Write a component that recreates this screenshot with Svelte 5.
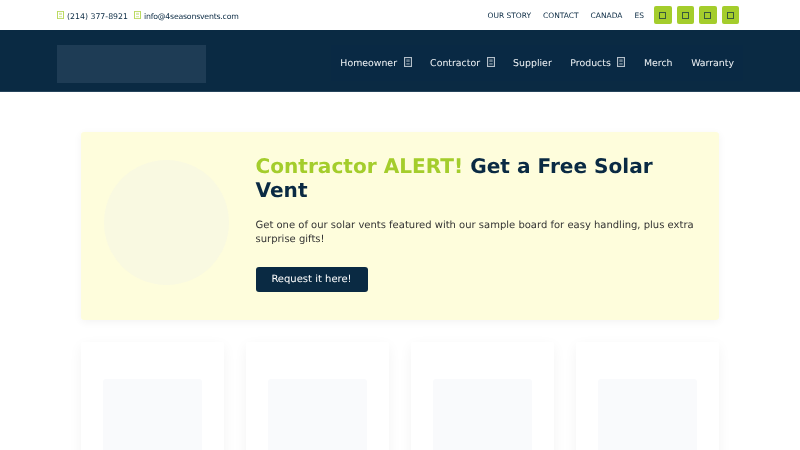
<script>
  const nav = [
    { label: 'Homeowner', caret: true },
    { label: 'Contractor', caret: true },
    { label: 'Supplier' },
    { label: 'Products', caret: true },
    { label: 'Merch' },
    { label: 'Warranty' }
  ];
</script>

<!-- the source icons are missing-glyph boxes, so they are drawn as small hollow boxes -->
{#snippet glyphBox()}
  <svg class="glyph" viewBox="0 0 7 9" aria-hidden="true" preserveAspectRatio="none">
    <rect x="0.5" y="0.5" width="6" height="8" fill="none" stroke="currentColor" stroke-opacity="0.75" />
    <path d="M2 2h3v2.5H2zM2 5.5h3V7H2z" fill="currentColor" fill-opacity="0.4" />
  </svg>
{/snippet}

<div class="page">
  <div class="topbar">
    <div class="contact">
      <span class="contact-item">{@render glyphBox()}(214) 377-8921</span>
      <span class="contact-item mail">{@render glyphBox()}info@4seasonsvents.com</span>
    </div>
    <div class="toplinks">
      <a href="#story">OUR STORY</a>
      <a href="#contact">CONTACT</a>
      <a href="#canada">CANADA</a>
      <a href="#es">ES</a>
      <div class="socials">
        {#each [1, 2, 3, 4] as s}
          <a class="social" href="#social{s}"><span class="social-box"></span></a>
        {/each}
      </div>
    </div>
  </div>

  <header class="header">
    <div class="logo"></div>
    <nav class="nav">
      {#each nav as item}
        <a class="nav-item" href="#nav">{item.label}{#if item.caret}{@render glyphBox()}{/if}</a>
      {/each}
    </nav>
  </header>

  <main>
    <section class="promo">
      <div class="circle"></div>
      <div class="promo-text">
        <h2><span class="lime">Contractor ALERT!</span> Get a Free Solar Vent</h2>
        <p>Get one of our solar vents featured with our sample board for easy handling, plus extra surprise gifts!</p>
        <a class="btn" href="#request">Request it here!</a>
      </div>
    </section>

    <section class="cards">
      {#each [1, 2, 3, 4] as c}
        <div class="card"><div class="thumb"></div></div>
      {/each}
    </section>
  </main>
</div>

<style>
  :global(body) {
    margin: 0;
    background: #fff;
    font-family: "DejaVu Sans", sans-serif;
    text-rendering: geometricPrecision;
    overflow: hidden;
    height: 450px;
  }

  .page {
    height: 450px;
    overflow: hidden;
    filter: blur(0.35px);
  }

  a {
    color: inherit;
    text-decoration: none;
  }

  .topbar {
    height: 30px;
    padding: 0 61px 0 57px;
    display: flex;
    align-items: center;
    justify-content: space-between;
    color: #0a2a43;
  }

  .contact {
    display: flex;
    gap: 6px;
    font-size: 7.8px;
    margin-top: 2px;
  }

  .contact-item {
    display: flex;
    align-items: center;
    gap: 3px;
  }

  .mail {
    letter-spacing: -0.22px;
  }

  .contact-item .glyph {
    width: 7px;
    height: 8px;
    color: #a4cd2c;
    margin-top: -3px;
  }

  .toplinks {
    display: flex;
    align-items: center;
    gap: 12px;
    font-size: 7.5px;
  }

  .socials {
    display: flex;
    gap: 5px;
    margin-left: -2px;
  }

  .social {
    width: 17.5px;
    height: 17.5px;
    border-radius: 2px;
    background: #a4cd2c;
    display: flex;
    align-items: center;
    justify-content: center;
  }

  .social-box {
    width: 7px;
    height: 7px;
    box-sizing: border-box;
    border: 1px solid rgba(10, 42, 67, 0.7);
  }

  .header {
    height: 62px;
    padding: 15px 57px 0;
    background: #0a2a43;
    display: flex;
    align-items: flex-start;
    justify-content: space-between;
    box-sizing: border-box;
    border-bottom: 1px solid #26445c;
  }

  .logo {
    width: 149px;
    height: 38px;
    background: #1e3c55;
  }

  .nav {
    display: flex;
    align-items: center;
    gap: 18.6px;
    height: 36px;
    padding: 0 9px;
    font-size: 9.4px;
    color: #eef2f5;
    background: #092944;
  }

  .nav-item {
    display: flex;
    align-items: center;
    gap: 6.5px;
  }

  .nav-item .glyph {
    width: 8px;
    height: 10px;
    margin-top: -2px;
  }

  main {
    padding: 40px 81px 0;
  }

  .promo {
    height: 188px;
    box-sizing: border-box;
    background: #fefddc;
    border-radius: 3px;
    box-shadow: 0 2px 8px rgba(0, 0, 0, 0.05);
    display: flex;
    align-items: center;
    padding: 0 22px 7px 22.5px;
    gap: 27px;
  }

  .circle {
    width: 125px;
    height: 125px;
    flex: none;
    border-radius: 50%;
    background: #f9f9e1;
  }

  h2 {
    margin: 0 0 17px;
    font-size: 20.1px;
    line-height: 24px;
    color: #0a2a43;
  }

  .lime {
    color: #a4cd2c;
  }

  p {
    margin: 0 0 20px;
    font-size: 10px;
    line-height: 14px;
    color: #333;
  }

  .btn {
    display: block;
    width: 112px;
    height: 25px;
    line-height: 25px;
    text-align: center;
    border-radius: 3px;
    background: #0a2a43;
    color: #fff;
    font-size: 10px;
  }

  .cards {
    display: grid;
    grid-template-columns: repeat(4, 1fr);
    gap: 22px;
    margin-top: 22px;
  }

  .card {
    height: 200px;
    padding: 37px 22px 0;
    box-shadow: 0 4px 14px rgba(0, 0, 0, 0.05);
    border-radius: 3px;
  }

  .thumb {
    height: 150px;
    background: #f9fafc;
    border-radius: 3px;
  }
</style>
